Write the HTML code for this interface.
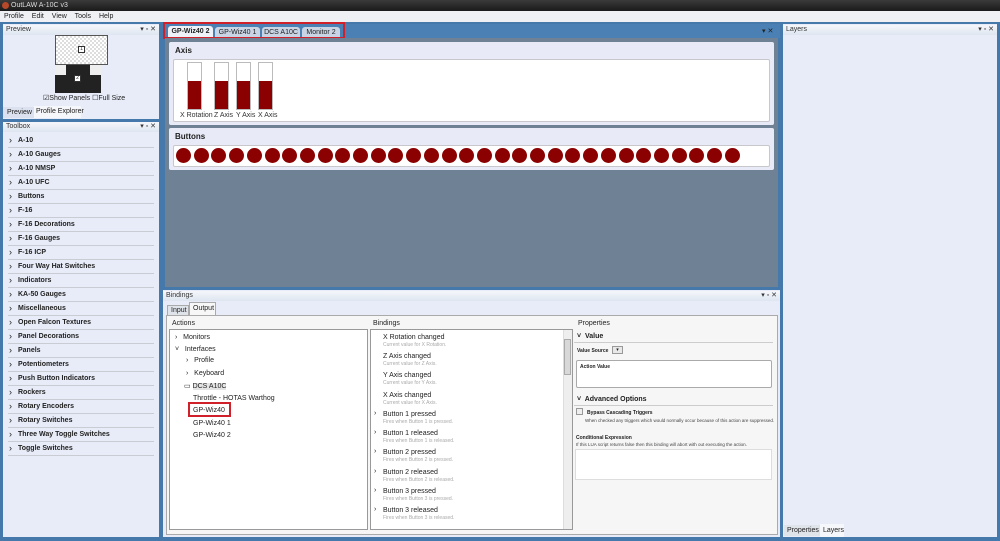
<!DOCTYPE html>
<html><head><meta charset="utf-8"><style>
*{box-sizing:border-box;margin:0;padding:0}
body{width:1000px;height:541px;overflow:hidden;background:#4579ab;font-family:"Liberation Sans",sans-serif;font-size:7px;color:#222;position:relative}
.a{position:absolute;white-space:nowrap}
.ph{position:absolute;height:10px;background:linear-gradient(#f4f6fb,#dfe6f1);font-size:7px;padding-left:3px;line-height:10px;color:#333}
.ph .c{position:absolute;right:3px;top:0;font-size:7px}
.tb{position:absolute;left:8px;width:146px;height:14px;border-bottom:1px solid #c9ccd3;font-weight:bold;font-size:7px;line-height:14px;padding-left:10px}
.tb:before{content:"›";position:absolute;left:1px;font-weight:normal;font-size:9px;line-height:13px}
.circ{position:absolute;top:148px;width:15px;height:15px;border-radius:50%;background:#8b0000}
.bar{position:absolute;top:62px;width:15px;height:48px;background:#fff;border:1px solid #bbb}
.bar i{position:absolute;left:0;right:0;bottom:0;height:28px;background:#8b0000}
.bl{position:absolute;top:112px;font-size:7px;color:#333}
.it{position:absolute;font-size:7px;color:#222;white-space:nowrap}
.bn{position:absolute;left:383px;font-size:7px;color:#222;white-space:nowrap}
.bn small{display:block;font-size:5px;color:#aaa;margin-top:1px}
</style></head><body>
<div class="a" style="left:0;top:0;width:1000px;height:11px;background:linear-gradient(#3a3a3a,#1a1a1a);color:#ddd;font-size:7px;line-height:11px;padding-left:11px">OutLAW A-10C v3</div>
<div class="a" style="left:2px;top:2px;width:7px;height:7px;border-radius:50%;background:#b5492a"></div>
<div class="a" style="left:0;top:11px;width:1000px;height:11px;background:#eef0f4;font-size:7px;line-height:11px;padding-left:4px;word-spacing:6px">Profile Edit View Tools Help</div>

<!-- Preview -->
<div class="a" style="left:3px;top:24px;width:156px;height:95px;background:#e8ecf8"></div>
<div class="ph" style="left:3px;top:25px;width:156px">Preview<span class="c">▾ ▫ ✕</span></div>
<div class="a" style="left:55px;top:35px;width:53px;height:30px;background:repeating-conic-gradient(#ddd 0 25%,#fff 0 50%) 0 0/4px 4px;border:1px solid #555"></div>
<div class="a" style="left:78px;top:46px;width:7px;height:7px;border:1px solid #333;background:#fff;font-size:5px;text-align:center;line-height:5px">1</div>
<div class="a" style="left:55px;top:65px;width:46px;height:28px;background:#222"></div>
<div class="a" style="left:55px;top:65px;width:11px;height:10px;background:#eee"></div>
<div class="a" style="left:90px;top:65px;width:11px;height:10px;background:#eee"></div>
<div class="a" style="left:74px;top:75px;width:7px;height:7px;border:1px solid #333;background:#fff;font-size:5px;text-align:center;line-height:5px">2</div>
<div class="a" style="left:43px;top:94px;font-size:7px">☑Show Panels ☐Full Size</div>
<div class="a" style="left:3px;top:107px;width:31px;height:11px;background:#dbe1ee;font-size:7px;line-height:11px;padding-left:4px">Preview</div>
<div class="a" style="left:34px;top:106px;width:47px;height:12px;background:#f6f7fa;font-size:7px;line-height:12px;padding-left:2px">Profile Explorer</div>

<!-- Toolbox -->
<div class="a" style="left:3px;top:122px;width:156px;height:415px;background:#e8ecf8"></div>
<div class="ph" style="left:3px;top:122px;width:156px">Toolbox<span class="c">▾ ▫ ✕</span></div>
<div class="tb" style="top:134px">A-10</div>
<div class="tb" style="top:148px">A-10 Gauges</div>
<div class="tb" style="top:162px">A-10 NMSP</div>
<div class="tb" style="top:176px">A-10 UFC</div>
<div class="tb" style="top:190px">Buttons</div>
<div class="tb" style="top:204px">F-16</div>
<div class="tb" style="top:218px">F-16 Decorations</div>
<div class="tb" style="top:232px">F-16 Gauges</div>
<div class="tb" style="top:246px">F-16 ICP</div>
<div class="tb" style="top:260px">Four Way Hat Switches</div>
<div class="tb" style="top:274px">Indicators</div>
<div class="tb" style="top:288px">KA-50 Gauges</div>
<div class="tb" style="top:302px">Miscellaneous</div>
<div class="tb" style="top:316px">Open Falcon Textures</div>
<div class="tb" style="top:330px">Panel Decorations</div>
<div class="tb" style="top:344px">Panels</div>
<div class="tb" style="top:358px">Potentiometers</div>
<div class="tb" style="top:372px">Push Button Indicators</div>
<div class="tb" style="top:386px">Rockers</div>
<div class="tb" style="top:400px">Rotary Encoders</div>
<div class="tb" style="top:414px">Rotary Switches</div>
<div class="tb" style="top:428px">Three Way Toggle Switches</div>
<div class="tb" style="top:442px">Toggle Switches</div>

<!-- Document area -->
<div class="a" style="left:163px;top:24px;width:617px;height:14px;background:#4a80b3"></div>
<div class="a" style="left:168px;top:26px;width:45px;height:12px;background:#eef1f7;font-weight:bold;font-size:7px;line-height:12px;text-align:center;border-radius:3px 3px 0 0">GP-Wiz40 2</div>
<div class="a" style="left:215px;top:27px;width:45px;height:11px;background:#c9d4e4;font-size:7px;line-height:11px;text-align:center;border-radius:3px 3px 0 0">GP-Wiz40 1</div>
<div class="a" style="left:262px;top:27px;width:38px;height:11px;background:#c9d4e4;font-size:7px;line-height:11px;text-align:center;border-radius:3px 3px 0 0">DCS A10C</div>
<div class="a" style="left:302px;top:27px;width:38px;height:11px;background:#c9d4e4;font-size:7px;line-height:11px;text-align:center;border-radius:3px 3px 0 0">Monitor 2</div>
<div class="a" style="left:163px;top:22px;width:182px;height:17px;border:2px solid #d0202a"></div>
<div class="a" style="left:762px;top:27px;color:#222;font-size:7px">▾ ✕</div>
<div class="a" style="left:165px;top:38px;width:613px;height:249px;background:#6f8195"></div>
<div class="a" style="left:169px;top:42px;width:605px;height:83px;background:#e8ebf7;border-radius:2px"></div>
<div class="a" style="left:175px;top:46px;font-weight:bold;font-size:8px">Axis</div>
<div class="a" style="left:173px;top:59px;width:597px;height:63px;background:#fff;border:1px solid #c8c8cc;border-radius:2px"></div>
<div class="bar" style="left:187px"><i></i></div>
<div class="bar" style="left:214px"><i></i></div>
<div class="bar" style="left:236px"><i></i></div>
<div class="bar" style="left:258px"><i></i></div>
<div class="bl" style="left:180px">X Rotation</div>
<div class="bl" style="left:214px">Z Axis</div>
<div class="bl" style="left:236px">Y Axis</div>
<div class="bl" style="left:258px">X Axis</div>
<div class="a" style="left:169px;top:128px;width:605px;height:42px;background:#e8ebf7;border-radius:2px"></div>
<div class="a" style="left:175px;top:132px;font-weight:bold;font-size:8px">Buttons</div>
<div class="a" style="left:173px;top:145px;width:597px;height:22px;background:#fff;border:1px solid #c8c8cc;border-radius:2px"></div>
<div id="cs"></div>

<!-- Bindings -->
<div class="a" style="left:163px;top:290px;width:617px;height:247px;background:#e8ecf8"></div>
<div class="ph" style="left:163px;top:291px;width:617px">Bindings<span class="c">▾ ▫ ✕</span></div>
<div class="a" style="left:167px;top:305px;width:22px;height:11px;background:#dfe3ea;border:1px solid #aaa;font-size:7px;line-height:9px;padding-left:3px">Input</div>
<div class="a" style="left:189px;top:302px;width:27px;height:14px;background:#f7f7f7;border:1px solid #aaa;border-bottom:none;font-size:7px;line-height:12px;padding-left:3px">Output</div>
<div class="a" style="left:166px;top:315px;width:612px;height:220px;background:#f6f6f6;border:1px solid #aaa"></div>
<div class="a" style="left:172px;top:320px">Actions</div>
<div class="a" style="left:373px;top:320px">Bindings</div>
<div class="a" style="left:578px;top:320px">Properties</div>
<div class="a" style="left:169px;top:329px;width:199px;height:201px;background:#fff;border:1px solid #999"></div>
<div class="a" style="left:370px;top:329px;width:203px;height:201px;background:#fff;border:1px solid #999"></div>
<div class="a" style="left:563px;top:330px;width:9px;height:199px;background:#eee;border-left:1px solid #ddd"></div>
<div class="a" style="left:564px;top:339px;width:7px;height:36px;background:#d8d8d8;border:1px solid #aaa"></div>
<div class="it" style="left:175px;top:334px">›&nbsp;&nbsp; Monitors</div>
<div class="it" style="left:175px;top:346px">˅&nbsp;&nbsp; Interfaces</div>
<div class="it" style="left:186px;top:357px">›&nbsp;&nbsp; Profile</div>
<div class="it" style="left:186px;top:370px">›&nbsp;&nbsp; Keyboard</div>
<div class="it" style="left:184px;top:382px">▭ <span style="background:#e4e4e4">DCS A10C</span></div>
<div class="it" style="left:193px;top:395px">Throttle - HOTAS Warthog</div>
<div class="it" style="left:193px;top:407px">GP-Wiz40</div>
<div class="a" style="left:188px;top:402px;width:43px;height:15px;border:2px solid #d0202a"></div>
<div class="it" style="left:193px;top:420px">GP-Wiz40 1</div>
<div class="it" style="left:193px;top:432px">GP-Wiz40 2</div>
<div class="bn" style="top:334px">X Rotation changed<small>Current value for X Rotation.</small></div>
<div class="bn" style="top:353px">Z Axis changed<small>Current value for Z Axis.</small></div>
<div class="bn" style="top:372px">Y Axis changed<small>Current value for Y Axis.</small></div>
<div class="bn" style="top:392px">X Axis changed<small>Current value for X Axis.</small></div>
<div class="bn" style="top:411px">Button 1 pressed<small>Fires when Button 1 is pressed.</small></div>
<div class="bn" style="top:430px">Button 1 released<small>Fires when Button 1 is released.</small></div>
<div class="bn" style="top:449px">Button 2 pressed<small>Fires when Button 2 is pressed.</small></div>
<div class="bn" style="top:469px">Button 2 released<small>Fires when Button 2 is released.</small></div>
<div class="bn" style="top:488px">Button 3 pressed<small>Fires when Button 3 is pressed.</small></div>
<div class="bn" style="top:507px">Button 3 released<small>Fires when Button 3 is released.</small></div>
<div class="it" style="left:374px;top:410px">›</div><div class="it" style="left:374px;top:429px">›</div><div class="it" style="left:374px;top:448px">›</div><div class="it" style="left:374px;top:468px">›</div><div class="it" style="left:374px;top:487px">›</div><div class="it" style="left:374px;top:506px">›</div>
<div class="a" style="left:577px;top:333px;font-weight:bold;font-size:7px">˅&nbsp; Value</div>
<div class="a" style="left:574px;top:342px;width:199px;height:1px;background:#ccc"></div>
<div class="a" style="left:577px;top:348px;font-weight:bold;font-size:5px">Value Source</div>
<div class="a" style="left:612px;top:346px;width:11px;height:8px;border:1px solid #999;background:#e8e8e8;font-size:5px;text-align:center">▾</div>
<div class="a" style="left:576px;top:360px;width:196px;height:28px;background:#fff;border:1px solid #aaa;border-radius:2px;font-weight:bold;font-size:5px;padding:3px">Action Value</div>
<div class="a" style="left:577px;top:396px;font-weight:bold;font-size:7px">˅&nbsp; Advanced Options</div>
<div class="a" style="left:574px;top:405px;width:199px;height:1px;background:#ccc"></div>
<div class="a" style="left:576px;top:408px;width:7px;height:7px;border:1px solid #999;background:#eee"></div>
<div class="a" style="left:587px;top:410px;font-weight:bold;font-size:5px">Bypass Cascading Triggers</div>
<div class="a" style="left:585px;top:418px;font-size:4.5px;width:190px;color:#444;white-space:normal">When checked any triggers which would normally occur because of this action are suppressed.</div>
<div class="a" style="left:576px;top:435px;font-weight:bold;font-size:5px">Conditional Expression</div>
<div class="a" style="left:576px;top:442px;font-size:4.5px;color:#444">If this LUA script returns false then this binding will abort with out executing the action.</div>
<div class="a" style="left:575px;top:449px;width:197px;height:31px;background:#fff;border:1px solid #ddd"></div>

<!-- Layers -->
<div class="a" style="left:783px;top:24px;width:214px;height:513px;background:#e8ecf8"></div>
<div class="ph" style="left:783px;top:25px;width:214px">Layers<span class="c">▾ ▫ ✕</span></div>
<div class="a" style="left:784px;top:525px;width:36px;height:11px;background:#dfe3ea;font-size:7px;line-height:11px;padding-left:3px">Properties</div>
<div class="a" style="left:820px;top:524px;width:24px;height:13px;background:#f6f7fa;font-size:7px;line-height:13px;padding-left:3px">Layers</div>
<script>
var h='';for(var i=0;i<32;i++){h+='<div class="circ" style="left:'+(176+i*17.7).toFixed(1)+'px"></div>';}
document.getElementById('cs').innerHTML=h;
</script>
</body></html>
